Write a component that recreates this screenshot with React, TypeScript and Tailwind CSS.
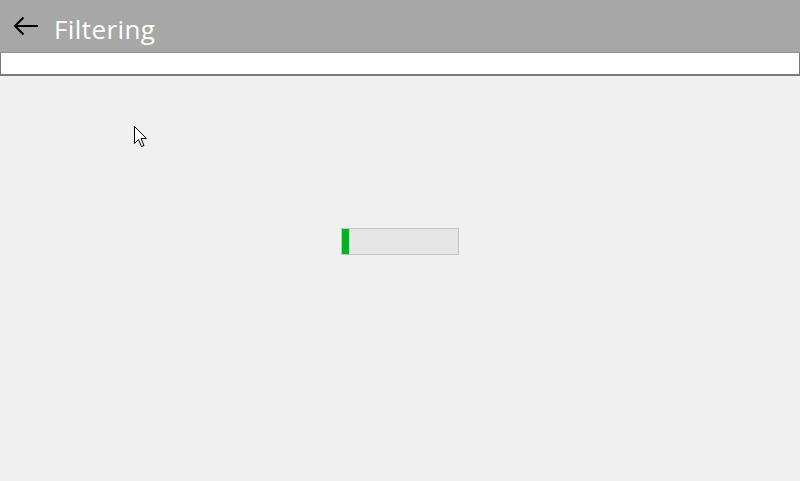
export default function App() {
  const progress = 7;

  return (
    <div className="relative w-[800px] h-[481px] overflow-hidden bg-[#f0f0f0] flex flex-col" style={{ fontFamily: '"Open Sans", "Noto Sans", sans-serif' }}>
      {/* Title bar */}
      <header className="h-[53px] bg-[#a7a7a7] flex items-center border-b border-[#8f8f8f] shrink-0">
        <button className="w-[50px] h-[52px] flex items-center justify-center pl-[1px]">
          <svg width="26" height="20" viewBox="0 0 26 20" fill="none" stroke="#000" strokeWidth="2">
            <path d="M25 10H2" />
            <path d="M10.5 1.5L2 10l8.5 8.5" />
          </svg>
        </button>
        <h1 className="text-[26px] text-white leading-none pl-[4px] pt-[5px] tracking-[0.4px]">Filtering</h1>
      </header>

      {/* Filter input */}
      <input
        type="text"
        className="h-[23px] w-full bg-white border border-[#7a7a7a] border-t-0 border-b-2 outline-none shrink-0"
      />

      {/* Content */}
      <main className="flex-1 flex justify-center">
        <div className="mt-[152px] ml-[-1px] w-[118px] h-[27px] border border-[#c4c4c4] bg-[#e6e6e6]">
          <div className="h-full bg-[#06b025]" style={{ width: `${progress}px` }} />
        </div>
      </main>

      {/* Mouse cursor */}
      <svg className="absolute left-[134px] top-[126px]" width="14" height="23" viewBox="0 0 14 23">
        <path d="M0.5 0.5V17.5L4.5 13.5L7.5 20.5L10 19.5L7 12.5H12.5Z" fill="#fff" stroke="#000" strokeWidth="1" />
      </svg>
    </div>
  );
}
